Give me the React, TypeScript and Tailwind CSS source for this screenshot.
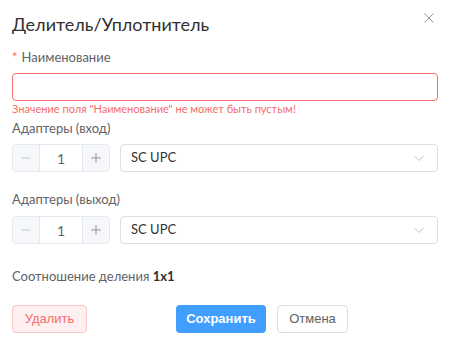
import React from "react";

const F = { fontFamily: 'Lato, "Open Sans", sans-serif' };
const A = { fontFamily: '"Liberation Sans", Arial, sans-serif' };

function Stepper() {
  return (
    <div className="flex h-[28px] w-[98px] shrink-0 overflow-hidden rounded-[4px] border border-[#e4e7ed] text-[#606266]">
      <div className="flex w-[27px] items-center justify-center bg-[#f5f7fa] border-r border-[#e4e7ed]">
        <svg width="12" height="12" viewBox="0 0 12 12"><path d="M1.5 6h9" stroke="#c0c4cc" strokeWidth="1" /></svg>
      </div>
      <div className="flex flex-1 items-center justify-center text-[14px] text-[#606266]" style={F}>1</div>
      <div className="flex w-[27px] items-center justify-center bg-[#f5f7fa] border-l border-[#e4e7ed]">
        <svg width="12" height="12" viewBox="0 0 12 12"><path d="M1 6h10M6 1v10" stroke="#909399" strokeWidth="1" /></svg>
      </div>
    </div>
  );
}

function Select() {
  return (
    <div className="ml-[10px] flex h-[28px] flex-1 items-center justify-between rounded-[4px] border border-[#dcdfe6] pl-[10px] pr-[12px]">
      <span className="text-[13px] text-[#303133]" style={F}>SC UPC</span>
      <svg width="12" height="12" viewBox="0 0 12 12"><path d="M1.5 4l4.5 4.5L10.5 4" stroke="#c0c4cc" strokeWidth="1" fill="none" /></svg>
    </div>
  );
}

export default function App() {
  return (
    <div className="relative h-[362px] w-[450px] bg-white px-[12px]" style={F}>
      <div className="flex items-start justify-between pt-[11px]">
        <div className="text-[18px] leading-[26px] text-[#303133]">Делитель/Уплотнитель</div>
        <svg className="mt-[1px] mr-[3px]" width="12" height="12" viewBox="0 0 12 12"><path d="M1.5 1.5l9 9M10.5 1.5l-9 9" stroke="#909399" strokeWidth="1" /></svg>
      </div>
      <div className="mt-[11px] text-[13px] leading-[18px] text-[#606266]">
        <span className="text-[#f56c6c] mr-[4px]">*</span>Наименование
      </div>
      <div className="mt-[7px] h-[28px] w-full rounded-[4px] border border-[#f56c6c]" />
      <div className="mt-[1px] text-[11px] leading-[14px] text-[#f56c6c]">
        Значение поля "Наименование" не может быть пустым!
      </div>
      <div className="mt-[3px] text-[13px] leading-[18px] text-[#606266]">Адаптеры (вход)</div>
      <div className="mt-[7px] flex">
        <Stepper />
        <Select />
      </div>
      <div className="mt-[18px] text-[13px] leading-[18px] text-[#606266]">Адаптеры (выход)</div>
      <div className="mt-[8px] flex">
        <Stepper />
        <Select />
      </div>
      <div className="mt-[23px] text-[13px] leading-[18px] text-[#606266]">
        Соотношение деления <b className="text-[#303133]">1x1</b>
      </div>
      <div className="mt-[20px] flex items-center">
        <div className="flex h-[28px] w-[75px] items-center justify-center rounded-[4px] border border-[#fbc4c4] bg-[#fef0f0] text-[13px] text-[#f56c6c]" style={A}>Удалить</div>
        <div className="ml-[89px] flex h-[28px] w-[90px] items-center justify-center rounded-[4px] bg-[#409eff] text-[13px] font-bold text-white" style={A}>Сохранить</div>
        <div className="ml-[11px] flex h-[28px] w-[71px] items-center justify-center rounded-[4px] border border-[#dcdfe6] bg-white text-[13px] text-[#606266]" style={A}>Отмена</div>
      </div>
    </div>
  );
}
